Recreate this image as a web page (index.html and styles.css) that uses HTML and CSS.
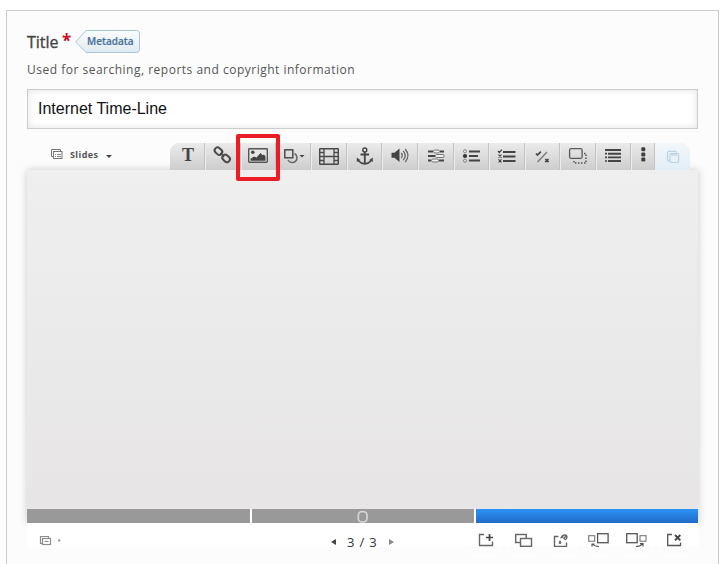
FILE: index.html
```html
<!DOCTYPE html>
<html lang="en">
<head>
<meta charset="utf-8">
<title>Slide editor</title>
<link rel="stylesheet" href="styles.css">
</head>
<body>
<main class="panel">
  <header class="heading">
    <h1 class="title">Title</h1><span class="required">*</span>
    <div class="tag">
      <svg class="tag-shape" viewBox="0 0 65 24"><defs><linearGradient id="tg" x2="0" y2="1"><stop stop-color="#fbfdfe"/><stop offset="1" stop-color="#dfeaf1"/></linearGradient></defs><path d="M.7 12 10 1.500Q11 .5 12 .5H61.500Q64.500 .5 64.500 3.500V19.500Q64.500 22.500 61.500 22.500H12Q11 22.500 10 21.500Z" fill="url(#tg)" stroke="#aac6da"/></svg>
      <span class="tag-text">Metadata</span>
    </div>
  </header>
  <p class="hint">Used for searching, reports and copyright information</p>
  <div class="field">Internet Time-Line</div>

  <div class="tools">
    <div class="slides-menu">
      <svg class="slides-icon" viewBox="50 148 14 12"><g fill="none" stroke="#777"><path d="M53 156.500H51.500V149.500H60.500V151"/><rect x="53.500" y="151.500" width="8.500" height="7"/><path d="M55 154.500h1m1 0h4m-6 2h1m1 0h4" stroke="#888"/></g></svg>
      <span class="slides-label">Slides</span>
      <span class="caret"></span>
    </div>
    <nav class="toolbar">
      <div class="tool letter">T</div>
      <div class="tool"><svg viewBox="205 143 36 27"><g fill="none" stroke="#4a4a4a" stroke-width="2"><rect x="-4.300" y="-2.900" width="8.200" height="5.800" rx="2.900" transform="translate(218.600 151.300) rotate(42)"/><rect x="-3.900" y="-2.900" width="8.200" height="5.800" rx="2.900" transform="translate(226 158.300) rotate(42)"/><path d="M220.300 153l4 3.700" stroke-width="1.600"/></g></svg></div>
      <div class="tool"><svg viewBox="241 143 35 27"><rect x="248.700" y="148.700" width="18.600" height="13.600" rx=".7" fill="#e5e5e5" stroke="#555" stroke-width="1.400"/><circle cx="252.800" cy="152.300" r="1.800" fill="#444"/><path d="M250.500 160.800v-2l3.500-2.200 2.500 1 4-4.600 2.200 2.200 1.300-.7 1.500 2v4.300z" fill="#444"/></svg></div>
      <div class="tool"><svg viewBox="276 143 35 27"><path d="M294.500 153.500a4.800 4.800 0 1 1-6.500 6.500" fill="none" stroke="#666" stroke-width="1.500"/><rect x="284.800" y="149.800" width="8" height="8" fill="#ddd" stroke="#4d4d4d" stroke-width="1.500"/><path d="M299.500 155h5l-2.500 2.500z" fill="#444"/></svg></div>
      <div class="tool"><svg viewBox="311 143 36 27"><rect x="319.700" y="148.700" width="18.600" height="15.600" rx=".5" fill="none" stroke="#484848" stroke-width="1.400"/><path d="M324 149v15m10-15v15m-10-7.500h10m-14-4h4m-4 4h4m-4 4h4m10-8h4m-4 4h4m-4 4h4" fill="none" stroke="#484848" stroke-width="1.300"/></svg></div>
      <div class="tool"><svg viewBox="347 143 35 27"><circle cx="364.800" cy="150" r="2" fill="none" stroke="#444" stroke-width="1.400"/><path d="M364.800 152v12M360.500 154.500h8.600" stroke="#444" stroke-width="1.800"/><path d="M356.800 157.500l3.700 2.700-1.200.4q2 2.100 5.500 2.300 3.500-.2 5.500-2.300l-1.200-.4 3.700-2.700v4.500l-1-.7q-2.500 3-7 3.500-4.500-.5-7-3.500l-1 .7z" fill="#444"/></svg></div>
      <div class="tool"><svg viewBox="382 143 36 27"><path d="M391.500 152.800h3l5-4.300v13.500l-5-4.300h-3z" fill="#444"/><path d="M401.300 153q2 2.500 0 5m1.900-7.200q4 4.700 0 9.400m2-11.200q5.500 6.500 0 13" fill="none" stroke="#666" stroke-width="1.300"/></svg></div>
      <div class="tool"><svg viewBox="418 143 36 27"><path d="M428 151.500h5m7 0h4m-16 4.500h7m-7 4.500h3m8 0h5" stroke="#444" stroke-width="2.200"/><g fill="#eee" stroke="#777"><rect x="433.500" y="150" width="6" height="3" rx="1.500"/><rect x="435.500" y="154.500" width="8.500" height="3" rx="1"/><rect x="431.500" y="159" width="7" height="3" rx="1.500"/></g></svg></div>
      <div class="tool"><svg viewBox="454 143 35 27"><path d="M469 151.500h11m-11 4.500h9m-9 4.500h11" stroke="#444" stroke-width="2.200"/><circle cx="465" cy="156" r="2.100" fill="#333"/><g fill="none" stroke="#888"><circle cx="465" cy="151.300" r="1.600"/><circle cx="465" cy="160.700" r="1.600"/></g></svg></div>
      <div class="tool"><svg viewBox="489 143 36 27"><path d="M503 152h12.500m-12.500 4.500h12.500m-12.500 4.500h12.500" stroke="#444" stroke-width="1.900"/><path d="M498 151l1.300 1.500 2.700-2.800m-3.500 5 3 3m0-3-3 3m0 1.700 3 3m0-3-3 3" fill="none" stroke="#444" stroke-width="1.200"/></svg></div>
      <div class="tool"><svg viewBox="525 143 35 27"><path d="M537.500 162l9.500-10" stroke="#777" stroke-width="1.300"/><path d="M536 153.500l1.500 1.500 3.300-3.300m4.500 7.300 3.200 3.200m0-3.200-3.200 3.200" fill="none" stroke="#444" stroke-width="1.700"/></svg></div>
      <div class="tool"><svg viewBox="560 143 36 27"><rect x="569.600" y="148.600" width="12.500" height="9.800" rx="1.500" fill="none" stroke="#5a5a5a" stroke-width="1.300"/><path d="M584 153.500h2v9.500h-12v-3.500" fill="none" stroke="#555" stroke-width="1.500" stroke-dasharray="1.500 1.500"/></svg></div>
      <div class="tool"><svg viewBox="596 143 35 27"><path d="M605 150h16m-13 3.700h13m-13 3.700h13m-13 3.600h13" stroke="#444" stroke-width="1.900"/><path d="M605 153.700h2m-2 3.700h2m-2 3.600h2" stroke="#444" stroke-width="1.700"/></svg></div>
      <div class="tool"><svg viewBox="631 143 24 27"><g fill="#3f3f3f"><rect x="641.300" y="147.300" width="4" height="3.900" rx="1.200"/><rect x="641.300" y="152.500" width="4" height="3.900" rx="1.200"/><rect x="641.300" y="157.600" width="4" height="3.900" rx="1.200"/></g></svg></div>
      <div class="tool paste"><svg viewBox="655 143 35 27"><g fill="none" stroke="#b9d3e5" stroke-width="1.200"><path d="M669.500 161h-.7q-1.300 0-1.300-1.300v-7q0-1.300 1.300-1.300h6.500q1.200 0 1.200 1"/><rect x="670" y="153.500" width="8.600" height="9" rx="1.300"/><path d="M672 153.500v1.500h4.500v-1.500"/></g></svg></div>
      <div class="highlight"></div>
    </nav>
  </div>

  <section class="stage">
    <div class="canvas"></div>
    <div class="progress">
      <div class="segment"></div>
      <div class="segment middle"><svg viewBox="356 509 13 14"><rect x="358.300" y="511.700" width="8.700" height="10.300" rx="3.500" fill="none" stroke="#d5d5d5" stroke-width="1.700"/></svg></div>
      <div class="segment current"></div>
    </div>
  </section>
  <footer class="footer">
    <svg class="foot-left" viewBox="27 523 223 24"><g fill="none" stroke="#8d8d8d"><path d="M42 543.500h-1.500v-7h8v1.500" stroke-width="1.200"/><rect x="42.500" y="538.500" width="8" height="6" stroke-width="1.200"/><path d="M44.500 541.500h4"/></g><path d="M58.500 538.700v3.600l2-1.800z" fill="#777"/></svg>
    <div class="pager"><span class="prev"></span><span class="page">3 / 3</span><span class="next"></span></div>
    <div class="actions">
      <svg viewBox="467 523 38 24"><path d="M484 534.500h-4.500v11h13v-4" fill="none" stroke="#666" stroke-width="1.400"/><path d="M489.500 534v7m-3.500-3.500h7" stroke="#444" stroke-width="1.700"/></svg>
      <svg viewBox="505 523 37 24"><g fill="#fff" stroke="#666" stroke-width="1.400"><rect x="515.700" y="534.500" width="10.500" height="8"/><rect x="520.500" y="538.500" width="11" height="7.800"/></g></svg>
      <svg viewBox="542 523 38 24"><path d="M558.500 536.500h-4v10h12v-4" fill="none" stroke="#666" stroke-width="1.400"/><path d="M560 540l1.200 2q.8 1.800-1.200 2-2-.2-1.200-2zM560 538.500q1.500-4.500 5.500-4.200 2.500.8 2 4l-2 2.200-2.800-2.500z" fill="#666"/><path d="M562.800 537.300l2-1.200m.7 1.400v1.200" stroke="#fff"/></svg>
      <svg viewBox="580 523 38 24"><g fill="none" stroke="#555" stroke-width="1.300"><rect x="588.700" y="535.700" width="6" height="5.500" stroke="#777" stroke-width="1.100"/><rect x="597.600" y="533.700" width="10.500" height="9"/><path d="M592 544v2.500M591.500 544h3m-2 0q2 2.500 6.500 2.500" stroke-width="1.200"/></g></svg>
      <svg viewBox="618 523 37 24"><g fill="none" stroke="#555" stroke-width="1.300"><rect x="626.700" y="533.700" width="10.500" height="9"/><rect x="640" y="535.700" width="6" height="5.500" stroke="#777" stroke-width="1.100"/><path d="M640 543.700h3v2.800m-.5-2.300q-2 2.300-6.500 2.300" stroke-width="1.200"/></g></svg>
      <svg viewBox="655 523 43 24"><path d="M672 534.500h-4.300v11h12.800v-3" fill="none" stroke="#555" stroke-width="1.300"/><path d="M675 535l5.300 5.300m0-5.300-5.300 5.300" stroke="#444" stroke-width="1.900"/></svg>
    </div>
  </footer>
  <div class="ghosts"><span></span><span></span><span></span><span></span><span></span><span></span></div>
</main>
</body>
</html>
```
FILE: styles.css
```css
* { box-sizing: border-box; }
html, body { height: 100%; }
body { margin: 0; padding: 10px 9px 0 6px; overflow: hidden; background: #fff; font-family: "Open Sans", "Liberation Sans", sans-serif; }
svg { display: block; }
.panel { height: 580px; padding: 18px 20px 0; border: 1px solid #ccc; background: #fcfcfc; }
.heading { display: flex; align-items: flex-start; height: 30px; }
.title { margin: 0; width: 35px; font-size: 16px; font-weight: 400; line-height: 26px; color: #444; -webkit-text-stroke: .35px #444; white-space: nowrap; }
.required { width: 13px; font-size: 17px; line-height: 23px; font-weight: 700; color: #cb1026; }
.tag { display: grid; width: 65px; height: 24px; margin-top: 1px; }
.tag > * { grid-area: 1 / 1; }
.tag-shape { width: 65px; height: 24px; }
.tag-text { z-index: 1; padding-left: 12px; font-size: 10px; font-weight: 600; line-height: 23px; color: #4a709b; -webkit-text-stroke: .2px #4a709b; }
.hint { margin: 2px 0 0; font-size: 12px; line-height: 18px; letter-spacing: .5px; color: #555; white-space: nowrap; }
.field { height: 40px; margin-top: 10px; padding-left: 10px; border: 1px solid #ccc; background: #fff; box-shadow: inset 0 0 7px #e2e2e2; font: 16px/37px "Liberation Sans", sans-serif; color: #111; }
.tools { display: flex; height: 27px; margin-top: 14px; }
.slides-menu { display: flex; width: 143px; padding-left: 23px; }
.slides-icon { width: 14px; height: 12px; margin-top: 5px; }
.slides-label { width: 36px; margin-left: 6px; font-size: 9px; font-weight: 700; line-height: 23px; letter-spacing: .4px; color: #555; }
.caret { width: 0; height: 0; margin-top: 12px; border: 3px solid transparent; border-top-color: #444; border-bottom: 0; }
.toolbar { position: relative; display: grid; grid-template-columns: 35px 36px 35px 35px 36px 35px 36px 36px 35px 36px 35px 36px 35px 24px 35px; }
.tool { height: 27px; background: linear-gradient(#ebebeb, #cdcdcd); box-shadow: inset 1px 0 #ececec, inset -1px 0 #c3c3c3; }
.tool svg { width: 100%; height: 27px; }
.letter { padding-left: 1px; border-radius: 9px 0 0; text-align: center; font: bold 18px/25px "Liberation Serif", serif; color: #444; box-shadow: inset -1px 0 #c3c3c3; }
.paste { border-radius: 0 9px 0 0; background: linear-gradient(#f2f7fb, #e2edf5); box-shadow: none; }
.highlight { position: absolute; z-index: 2; left: 66px; top: -9px; width: 44px; height: 47px; border: 4px solid #ec1c24; border-radius: 2px; }
.stage { box-shadow: 0 0 8px rgba(0, 0, 0, .2); }
.canvas { height: 339px; background: linear-gradient(#efefef, #e7e5e6); }
.progress { display: grid; grid-template-columns: 223px 222px 222px; column-gap: 2px; height: 14px; background: #fff; }
.segment { background: #999; }
.middle { display: flex; padding-left: 104px; }
.middle svg { width: 13px; height: 14px; }
.current { background: linear-gradient(#2c93f6, #216ac8); }
.footer { position: relative; display: flex; height: 24px; background: #fff; }
.foot-left { width: 223px; height: 24px; }
.pager { display: flex; width: 217px; padding-left: 81px; }
.prev, .next { width: 0; height: 0; margin-top: 16px; border: 3.5px solid transparent; }
.prev { border-right: 5px solid #444; border-left: 0; }
.next { border-left: 5px solid #888; border-right: 0; }
.page { width: 34px; height: 18px; margin: 10px 8px 0 11px; font-size: 13px; line-height: 18px; letter-spacing: .8px; color: #333; white-space: nowrap; }
.actions { display: grid; grid-template-columns: 38px 37px 38px 38px 37px 43px; }
.actions svg { width: 100%; height: 24px; }
.ghosts { display: flex; gap: 7px; margin-left: 443px; }
.ghosts span { width: 31px; height: 9px; border: 1px solid #fff; border-top: 0; border-radius: 0 0 3px 3px; }
```
